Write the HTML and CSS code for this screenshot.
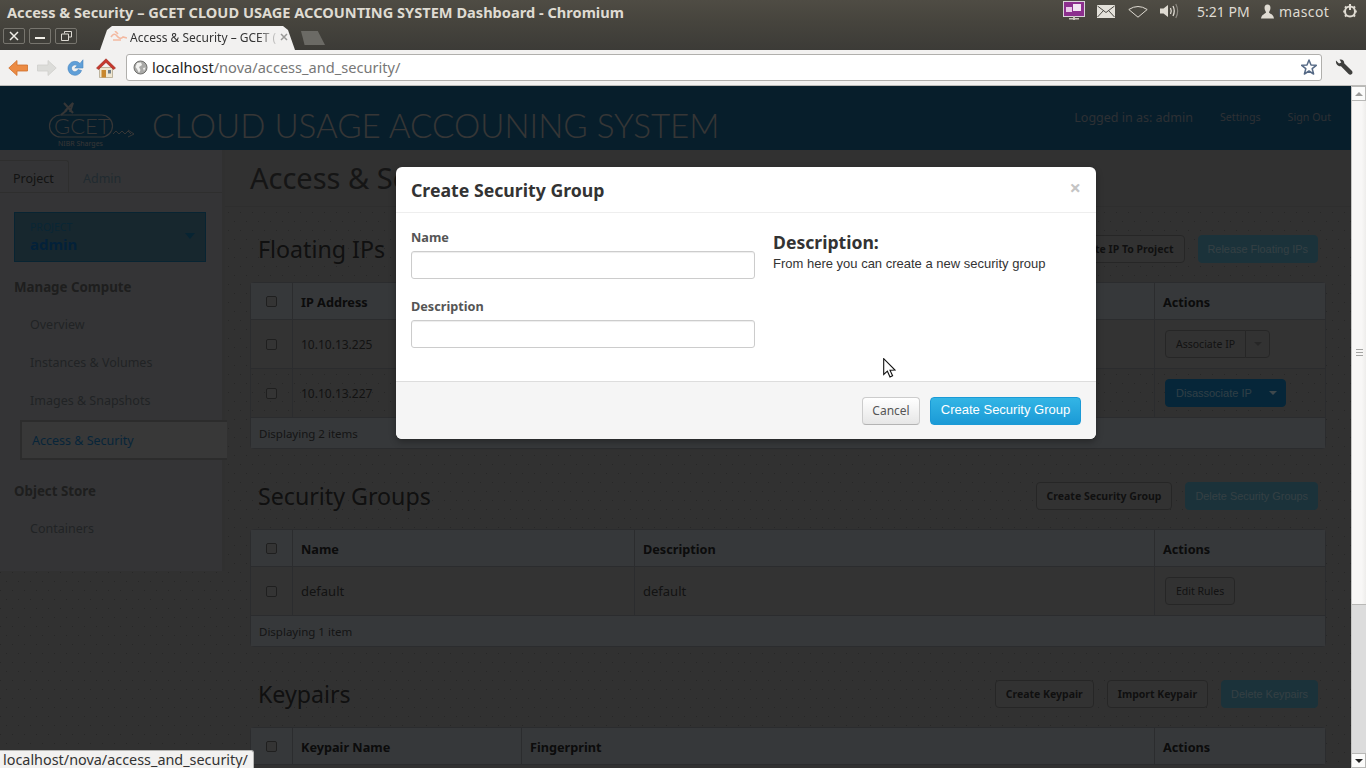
FILE: index.html
```html
<!DOCTYPE html>
<html lang="en">
<head>
    <meta charset="UTF-8">
    <title>Access &amp; Security – GCET CLOUD USAGE ACCOUNTING SYSTEM Dashboard - Chromium</title>
    <link rel="stylesheet" href="styles.css">
</head>
<body>
    <div class="os-bar">
        <span class="os-title">Access &amp; Security – GCET CLOUD USAGE ACCOUNTING SYSTEM Dashboard - Chromium</span>
        <div class="os-indicators">
            <svg class="ind-session" width="22" height="22" viewBox="0 0 22 22">
                <rect x="0.5" y="1.5" width="21" height="15" fill="#8c2f8e" stroke="#d9d3d9"/>
                <rect x="3" y="7" width="6" height="5" fill="#e8c8e8"/>
                <rect x="10" y="4" width="8" height="7" fill="#f2e4f2"/>
                <rect x="6" y="18" width="10" height="1.5" fill="#c8c4bc"/>
                <rect x="10" y="16" width="2" height="4" fill="#c8c4bc"/>
            </svg>
            <svg class="ind-mail" width="18" height="13" viewBox="0 0 18 13">
                <rect width="18" height="13" fill="#e4e1da"/>
                <path d="M0.5 1 L9 7.5 L17.5 1 M0.5 12 L6.5 5.5 M17.5 12 L11.5 5.5" fill="none" stroke="#4a4843" stroke-width="1"/>
            </svg>
            <svg class="ind-wifi" width="20" height="13" viewBox="0 0 20 13">
                <path d="M0.8 4.5 Q10 -1.5 19.2 4.5 L10 12.2 Z" fill="none" stroke="#dfdbd2" stroke-width="1"/>
            </svg>
            <svg class="ind-sound" width="20" height="16" viewBox="0 0 20 16">
                <path d="M0 5.5 H3.5 L8 2 V14 L3.5 10.5 H0 Z" fill="#dfdbd2"/>
                <path d="M10.5 5 Q12 8 10.5 11 M13 3 Q15.5 8 13 13" fill="none" stroke="#dfdbd2" stroke-width="1.3"/>
                <path d="M15.8 1 Q19.5 8 15.8 15" fill="none" stroke="#8b8880" stroke-width="1.2"/>
            </svg>
            <span class="os-time">5:21 PM</span>
            <svg class="ind-user" width="13" height="15" viewBox="0 0 13 15">
                <path d="M6.5 0.5 C9 0.5 9.7 2.6 9.4 4.6 C9.2 6.2 8.5 7.4 7.9 8.2 C8.3 9.6 12.6 10.4 13 14.5 H0 C0.4 10.4 4.7 9.6 5.1 8.2 C4.5 7.4 3.8 6.2 3.6 4.6 C3.3 2.6 4 0.5 6.5 0.5 Z" fill="#dfdbd2"/>
            </svg>
            <span class="os-user">mascot</span>
            <svg class="ind-power" width="16" height="16" viewBox="0 0 16 16">
                <circle cx="8" cy="8.5" r="5" fill="none" stroke="#dfdbd2" stroke-width="2"/>
                <path d="M8 1 V7 M1.2 8.5 H3 M13 8.5 H14.8 M3 3.5 L4.3 4.8 M13 3.5 L11.7 4.8 M3 13.5 L4.3 12.2 M13 13.5 L11.7 12.2" stroke="#dfdbd2" stroke-width="2" fill="none"/>
            </svg>
        </div>
    </div>

    <div class="tab-strip">
        <div class="win-buttons">
            <span class="win-btn">
                <svg width="10" height="10" viewBox="0 0 10 10"><path d="M1 1 L9 9 M9 1 L1 9" stroke="#f0eee8" stroke-width="1.5"/></svg>
            </span>
            <span class="win-btn">
                <svg width="10" height="10" viewBox="0 0 10 10"><path d="M0 7 H10" stroke="#f0eee8" stroke-width="2"/></svg>
            </span>
            <span class="win-btn">
                <svg width="11" height="10" viewBox="0 0 11 10"><path d="M3.5 2.5 V0.5 H10.5 V6 H7.5 M0.5 3 H7.5 V9.5 H0.5 Z" fill="none" stroke="#dcd9d2" stroke-width="1"/></svg>
            </span>
        </div>
        <div class="tab">
            <svg class="favicon" width="17" height="12" viewBox="0 0 17 12">
                <path d="M1 6 Q4 1 7 5 T13 6 L17 7 M5 0 L8 3 M3 9 H11" fill="none" stroke="#f4b9a0" stroke-width="1.6"/>
            </svg>
            <span class="tab-label">Access &amp; Security – GCET (</span>
            <svg class="tab-close" width="8" height="8" viewBox="0 0 8 8"><path d="M1 1 L7 7 M7 1 L1 7" stroke="#9a9a98" stroke-width="1.5"/></svg>
        </div>
        <span class="new-tab"></span>
    </div>

    <div class="toolbar">
        <svg class="tool-back" width="20" height="16" viewBox="0 0 20 16">
            <path d="M9 0.5 L0.8 8 L9 15.5 V11 H19.5 V5 H9 Z" fill="#ec8b43" stroke="#cf6f2c" stroke-width="0.8"/>
        </svg>
        <svg class="tool-forward" width="20" height="16" viewBox="0 0 20 16">
            <path d="M11 0.5 L19.2 8 L11 15.5 V11 H0.5 V5 H11 Z" fill="#dcdcd9" stroke="#cfcfcc" stroke-width="0.8"/>
        </svg>
        <svg class="tool-reload" width="18" height="18" viewBox="0 0 18 18">
            <path d="M14 4.5 A7 7 0 1 0 15.6 11.5 L12 10.6 A3.4 3.4 0 1 1 11.2 6.8 L8.8 9 H17 V0.8 Z" fill="#5f9fd8" stroke="#4a86c0" stroke-width="0.6"/>
        </svg>
        <svg class="tool-home" width="20" height="20" viewBox="0 0 20 20">
            <path d="M3.5 9.5 V19.5 H16.5 V9.5 Z" fill="#efe6d0" stroke="#a89c80" stroke-width="0.7"/>
            <path d="M0.5 10 L10 0.8 L19.5 10 L17.5 11.5 L10 4.4 L2.5 11.5 Z" fill="#c8372c" stroke="#992a20" stroke-width="0.6"/>
            <rect x="5.5" y="12" width="4.5" height="7.5" fill="#c8872e"/>
            <rect x="12" y="12" width="3" height="3.5" fill="#6f7e8a"/>
        </svg>
        <div class="url-box">
            <svg class="url-globe" width="15" height="15" viewBox="0 0 15 15">
                <circle cx="7.5" cy="7.5" r="6.5" fill="#a9a9a7" stroke="#6f6f6d" stroke-width="1"/>
                <path d="M4 3 L8 2.5 L9 5 L6 7 L7.5 10 L6 13 L4 9 L2.5 7 Z M10 8 L12.5 7.5 L11 11 Z" fill="#f2f2f0"/>
            </svg>
            <span class="url-host">localhost</span><span class="url-path">/nova/access_and_security/</span>
            <svg class="url-star" width="16" height="16" viewBox="0 0 16 16">
                <path d="M8 1 L10 6 L15.3 6.3 L11.2 9.7 L12.6 15 L8 12 L3.4 15 L4.8 9.7 L0.7 6.3 L6 6 Z" fill="#fff" stroke="#566a86" stroke-width="1.5" stroke-linejoin="round"/>
            </svg>
        </div>
        <svg class="tool-wrench" width="18" height="17" viewBox="0 0 18 17">
            <path d="M1 1.5 L4 4.5 L6.3 3.6 L4.6 0.6 C7.2 -0.2 9.4 1.6 9.2 4.2 L16.8 11.8 C17.8 12.8 17.6 14.2 16.8 15 C15.9 15.9 14.5 15.9 13.6 15 L6 7.2 C3.4 7.6 0.4 5 1 1.5 Z" fill="#3f3f3d"/>
        </svg>
    </div>

    <div class="viewport">
        <div class="page">
            <header class="top-bar">
                <svg class="logo" width="88" height="52" viewBox="0 0 88 52">
                    <path d="M13 17 L19 12 M16 5 L25 15 M17 13 L25 5 L22 14" fill="none" stroke="#b4b4b4" stroke-width="2"/>
                    <rect x="1.5" y="17" width="63" height="22" rx="11" fill="none" stroke="#b4b4b4" stroke-width="1.2"/>
                    <text x="6" y="36" class="logo-text">GCET</text>
                    <path d="M65 36 L68 33 L71 36 L74 33 L77 36 L80 33 L83 36 M80 32 L86 36 L80 39" fill="none" stroke="#b4b4b4" stroke-width="1"/>
                    <text x="10" y="48" class="logo-sub">NIBR Sharges</text>
                </svg>
                <span class="brand">CLOUD USAGE ACCOUNING SYSTEM</span>
                <nav class="user-nav">
                    <span class="user-name">Logged in as: admin</span>
                    <a class="user-link">Settings</a>
                    <a class="user-link">Sign Out</a>
                </nav>
            </header>

            <div class="columns">
                <aside class="sidebar">
                    <div class="side-tabs">
                        <span class="side-tab active">Project</span>
                        <span class="side-tab">Admin</span>
                    </div>
                    <div class="project-box">
                        <span class="project-label">PROJECT</span>
                        <span class="project-name">admin</span>
                        <span class="project-caret"></span>
                    </div>
                    <h4 class="side-title">Manage Compute</h4>
                    <ul class="side-nav">
                        <li>Overview</li>
                        <li>Instances &amp; Volumes</li>
                        <li>Images &amp; Snapshots</li>
                        <li class="current">Access &amp; Security</li>
                    </ul>
                    <h4 class="side-title store">Object Store</h4>
                    <ul class="side-nav">
                        <li>Containers</li>
                    </ul>
                </aside>

                <main class="content">
                    <div class="page-title"><h2>Access &amp; Security</h2></div>

                    <div class="sections">
                        <section class="block">
                            <div class="block-head">
                                <h3>Floating IPs</h3>
                                <div class="block-actions">
                                    <a class="btn">Allocate IP To Project</a>
                                    <a class="btn btn-primary">Release Floating IPs</a>
                                </div>
                            </div>
                            <table class="data" cellspacing="0">
                                <colgroup><col class="c-check"><col style="width:300px"><col style="width:300px"><col><col class="c-actions"></colgroup>
                                <thead>
                                    <tr><th><span class="check"></span></th><th>IP Address</th><th>Instance</th><th>Floating IP Pool</th><th>Actions</th></tr>
                                </thead>
                                <tbody>
                                    <tr>
                                        <td><span class="check"></span></td><td class="ip">10.10.13.225</td><td>-</td><td>nova</td>
                                        <td><span class="split"><a class="btn btn-plain">Associate IP</a><a class="btn btn-plain caret-btn"><i class="caret"></i></a></span></td>
                                    </tr>
                                    <tr class="clear">
                                        <td><span class="check"></span></td><td class="ip">10.10.13.227</td><td>-</td><td>nova</td>
                                        <td><span class="split"><a class="btn btn-dark">Disassociate IP</a><a class="btn btn-dark caret-btn"><i class="caret light"></i></a></span></td>
                                    </tr>
                                </tbody>
                                <tfoot>
                                    <tr><td colspan="5">Displaying 2 items</td></tr>
                                </tfoot>
                            </table>
                        </section>

                        <section class="block">
                            <div class="block-head">
                                <h3>Security Groups</h3>
                                <div class="block-actions">
                                    <a class="btn">Create Security Group</a>
                                    <a class="btn btn-primary">Delete Security Groups</a>
                                </div>
                            </div>
                            <table class="data" cellspacing="0">
                                <colgroup><col class="c-check"><col style="width:342px"><col><col class="c-actions"></colgroup>
                                <thead>
                                    <tr><th><span class="check"></span></th><th>Name</th><th>Description</th><th>Actions</th></tr>
                                </thead>
                                <tbody>
                                    <tr>
                                        <td><span class="check"></span></td><td>default</td><td>default</td>
                                        <td><a class="btn btn-plain">Edit Rules</a></td>
                                    </tr>
                                </tbody>
                                <tfoot>
                                    <tr><td colspan="4">Displaying 1 item</td></tr>
                                </tfoot>
                            </table>
                        </section>

                        <section class="block">
                            <div class="block-head">
                                <h3>Keypairs</h3>
                                <div class="block-actions">
                                    <a class="btn">Create Keypair</a>
                                    <a class="btn">Import Keypair</a>
                                    <a class="btn btn-primary">Delete Keypairs</a>
                                </div>
                            </div>
                            <table class="data" cellspacing="0">
                                <colgroup><col class="c-check"><col style="width:229px"><col><col class="c-actions"></colgroup>
                                <thead>
                                    <tr><th><span class="check"></span></th><th>Keypair Name</th><th>Fingerprint</th><th>Actions</th></tr>
                                </thead>
                            </table>
                        </section>
                    </div>
                </main>
            </div>

            <div class="backdrop"></div>

            <div class="modal">
                <div class="modal-header">
                    <h3>Create Security Group</h3>
                    <span class="modal-close">×</span>
                </div>
                <div class="modal-body">
                    <form class="modal-form">
                        <label for="sg-name">Name</label>
                        <input type="text" id="sg-name">
                        <label for="sg-desc">Description</label>
                        <input type="text" id="sg-desc">
                    </form>
                    <div class="modal-help">
                        <h3>Description:</h3>
                        <p>From here you can create a new security group</p>
                    </div>
                </div>
                <div class="modal-footer">
                    <button type="button" class="modal-cancel">Cancel</button>
                    <button type="button" class="modal-submit">Create Security Group</button>
                </div>
            </div>

            <svg class="cursor" width="13" height="20" viewBox="0 0 13 20">
                <path d="M0.7 0.7 V16.5 L4.4 13.2 L7 19 L9.6 17.8 L7 12.2 L12 12 Z" fill="#fff" stroke="#111" stroke-width="1.1"/>
            </svg>

            <div class="status-bubble">localhost/nova/access_and_security/</div>
        </div>

        <div class="scrollbar">
            <span class="scroll-btn"><i class="arrow-up"></i></span>
            <span class="scroll-thumb"><i class="grip"></i></span>
            <span class="scroll-track"></span>
            <span class="scroll-btn"><i class="arrow-down"></i></span>
        </div>
    </div>
</body>
</html>
```

FILE: styles.css
```css
* {
    margin: 0;
    padding: 0;
    box-sizing: border-box;
}

html, body {
    height: 768px;
    overflow: hidden;
}

body {
    font-family: 'Noto Sans', sans-serif;
    font-size: 13px;
    background-color: #3c3b37;
}

/* desktop panel */
.os-bar {
    height: 22px;
    display: flex;
    align-items: center;
    justify-content: space-between;
    padding-left: 7px;
    background: linear-gradient(#4f4c44, #46443d);
    color: #dfdbd2;
}

.os-title {
    font-size: 14.6px;
    font-weight: bold;
    white-space: nowrap;
    padding-top: 1px;
}

.os-indicators {
    display: flex;
    align-items: center;
    height: 22px;
    padding-right: 8px;
}

.ind-session { margin-right: 12px; }
.ind-mail { margin-right: 13px; }
.ind-wifi { margin-right: 12px; }
.ind-sound { margin-right: 17px; }
.ind-user { margin: 0 5px 0 12px; }

.os-time, .os-user {
    font-size: 14px;
    white-space: nowrap;
}

.os-time { width: 52px; }
.os-user { width: 50px; letter-spacing: 0.4px; }
.ind-power { margin-left: 13px; }

/* browser window */
.tab-strip {
    height: 28px;
    display: flex;
    padding-left: 3px;
    background: linear-gradient(#46443d, #3c3b37);
}

.win-buttons {
    display: flex;
    gap: 4px;
    padding-top: 6px;
}

.win-btn {
    width: 22px;
    height: 16px;
    display: flex;
    align-items: center;
    justify-content: center;
    border: 1px solid #77756e;
    border-radius: 2px;
    background-color: #3f3e39;
}

.tab {
    width: 195px;
    height: 24px;
    margin: 4px 0 0 23px;
    padding: 0 7px 2px 10px;
    display: flex;
    align-items: center;
    background-color: #f2f1f0;
    clip-path: polygon(0 100%, 7px 4px, 12px 0, calc(100% - 12px) 0, calc(100% - 7px) 4px, 100% 100%);
}

.favicon { flex: none; margin-right: 3px; }

.tab-label {
    flex: 1;
    font-size: 12px;
    color: #333;
    white-space: nowrap;
    -webkit-mask-image: linear-gradient(90deg, #000 85%, transparent);
    mask-image: linear-gradient(90deg, #000 85%, transparent);
}

.tab-close { flex: none; }

.new-tab {
    width: 24px;
    height: 14px;
    margin: 9px 0 0 6px;
    background-color: #6b6a65;
    clip-path: polygon(0 0, 70% 0, 100% 100%, 15% 100%);
}

.toolbar {
    height: 36px;
    display: flex;
    align-items: center;
    background-color: #f2f1f0;
    border-bottom: 1px solid #bdbcb9;
}

.tool-back { margin-left: 8px; }
.tool-forward { margin-left: 9px; }
.tool-reload { margin-left: 9px; }
.tool-home { margin-left: 12px; }
.tool-wrench { margin-left: 13px; }

.url-box {
    width: 1196px;
    height: 27px;
    margin-left: 10px;
    padding: 0 4px 1px 6px;
    display: flex;
    align-items: center;
    background-color: #fff;
    border: 1px solid #b0afac;
    border-radius: 3px;
    font-size: 14.6px;
}

.url-globe { margin-right: 4px; flex: none; }
.url-host { color: #222; }
.url-path { color: #777; flex: 1; }
.url-star { flex: none; }

/* page + scrollbar */
.viewport {
    height: 682px;
    display: flex;
}

.page {
    position: relative;
    width: 1351px;
    overflow: hidden;
    background-color: #a4a4a4;
    background-image:
        radial-gradient(circle at 0.5px 0.5px, #828282 0.5px, transparent 0.7px),
        radial-gradient(circle at 0.5px 0.5px, #828282 0.5px, transparent 0.7px);
    background-size: 12px 18px;
    background-position: 0 0, 6px 9px;
}

.scrollbar {
    width: 15px;
    display: flex;
    flex-direction: column;
    background-color: #dcdcdc;
    border-left: 1px solid #c4c4c2;
}

.scroll-btn {
    height: 15px;
    display: flex;
    align-items: center;
    justify-content: center;
    background-color: #fbfbfa;
    border: 1px solid #b8b8b6;
    border-left: 0;
}

.arrow-up {
    border: 4px solid transparent;
    border-top: 0;
    border-bottom: 4px solid #9b9b99;
}

.arrow-down {
    border: 4px solid transparent;
    border-bottom: 0;
    border-top: 4px solid #222;
}

.scroll-thumb {
    height: 504px;
    display: flex;
    align-items: center;
    justify-content: center;
    background: linear-gradient(90deg, #f8f7f6, #f8f7f6 70%, #eeedeb);
    border-bottom: 1px solid #b8b8b6;
}

.grip {
    width: 7px;
    height: 7px;
    background: repeating-linear-gradient(#a4a4a2 0, #a4a4a2 1px, transparent 1px, transparent 3px);
}

.scroll-track { flex: 1; }

/* dashboard header */
.top-bar {
    height: 64px;
    display: flex;
    align-items: center;
    padding-right: 20px;
    background-color: #1a6490;
    color: #b4b4b4;
}

.logo {
    margin: 12px 16px 0 48px;
    flex: none;
    align-self: flex-start;
}

.logo-text {
    font-family: 'Lato', sans-serif;
    font-size: 22px;
    fill: #b4b4b4;
    font-weight: 300;
}

.logo-sub {
    font-size: 7px;
    fill: #b4b4b4;
}

.brand {
    font-family: 'Lato', sans-serif;
    font-weight: 300;
    font-size: 33.2px;
    white-space: nowrap;
    padding-top: 14px;
}

.user-nav {
    margin-left: auto;
    padding-bottom: 2px;
    display: flex;
    align-items: center;
    color: #96a0ad;
}

.user-name { font-size: 12.5px; margin-right: 27px; }
.user-link { font-size: 10.7px; }
.user-link + .user-link { margin-left: 27px; }

.columns {
    display: flex;
    align-items: flex-start;
}

/* sidebar */
.sidebar {
    width: 225px;
    flex: none;
    padding: 10px 0 24px;
    background-color: #adb0b4;
    border-right: 3px solid #a0a0a0;
}

.side-tabs {
    display: flex;
    height: 33px;
    border-bottom: 1px solid #9a9a9a;
}

.side-tab {
    padding: 0 13px;
    line-height: 37px;
    font-size: 12.5px;
    color: #6f8da0;
}

.side-tab.active {
    color: #404040;
    width: 69px;
    border: 1px solid #9a9a9a;
    border-left: 0;
    border-bottom: 0;
    border-radius: 0 3px 0 0;
    line-height: 35px;
    margin-right: 1px;
}

.project-box {
    position: relative;
    display: flex;
    flex-direction: column;
    width: 192px;
    height: 50px;
    margin: 19px 0 0 14px;
    padding: 8px 15px 0;
    background-color: #4f8299;
    border: 1px solid #1c7aa8;
    color: #0a70c0;
}

.project-label {
    font-size: 10.5px;
    line-height: 13px;
    color: #2080b0;
}

.project-name {
    font-size: 15px;
    font-weight: bold;
    line-height: 20px;
}

.project-caret {
    position: absolute;
    right: 10px;
    top: 20px;
    border: 5px solid transparent;
    border-bottom: 0;
    border-top: 6px solid #1878a8;
}

.side-title {
    height: 24px;
    margin: 13px 0 0 14px;
    font-size: 13.3px;
    line-height: 24px;
    color: #666;
}

.side-title.store { margin-top: 19px; }

.side-nav {
    list-style: none;
    margin-top: 6px;
}

.side-nav li {
    height: 38px;
    line-height: 40px;
    padding-left: 30px;
    font-size: 12.5px;
    color: #70757c;
}

.side-nav li.current {
    height: 40px;
    line-height: 38px;
    margin: 1px -5px 0 20px;
    padding-left: 10px;
    background-color: #bbb;
    border: 2px solid #959595;
    border-right: 0;
    color: #1a7cc0;
}

/* main column */
.content {
    flex: 1;
    min-width: 0;
}

.page-title {
    height: 57px;
    padding-left: 25px;
    background-color: #a4a4a4;
    border-bottom: 1px solid #9b9b9b;
}

.page-title h2 {
    font-size: 29px;
    font-weight: normal;
    line-height: 56px;
    color: #484848;
    white-space: nowrap;
}

.sections {
    padding: 28px 25px 0;
}

.block {
    margin-bottom: 33px;
}

.block-head {
    display: flex;
    align-items: center;
    justify-content: space-between;
    height: 28px;
    padding: 0 8px;
    margin-bottom: 19px;
}

.block-head h3 {
    font-size: 23.2px;
    font-weight: normal;
    line-height: 28px;
    color: #383838;
}

.block-actions {
    display: flex;
    gap: 13px;
}

.btn {
    display: inline-block;
    height: 28px;
    padding: 0 10px;
    font-size: 10.5px;
    font-weight: bold;
    line-height: 27px;
    white-space: nowrap;
    color: #383838;
    background-color: #a8a8a8;
    border: 1px solid #808080;
    border-radius: 4px;
}

.btn-primary {
    padding: 0 9px;
    font-family: 'Liberation Sans', sans-serif;
    font-size: 10.9px;
    font-weight: normal;
    color: #b0d4e0;
    background-color: #5aa8c4;
    border-color: #5aa8c4;
}

.btn-plain {
    font-weight: normal;
    color: #404040;
    margin-left: 2px;
}

.btn-dark {
    font-family: 'Liberation Sans', sans-serif;
    font-size: 11px;
    font-weight: normal;
    color: #a0d0e8;
    background-color: #1480c0;
    border-color: #1480c0;
    margin-left: 2px;
    padding-right: 9px;
}

.split {
    display: inline-flex;
}

.split .btn:first-child {
    border-radius: 4px 0 0 4px;
}

.split .caret-btn {
    width: 25px;
    margin-left: -1px;
    padding: 0;
    display: flex;
    align-items: center;
    justify-content: center;
    border-radius: 0 4px 4px 0;
}

.caret {
    border: 4px solid transparent;
    border-bottom: 0;
    border-top: 4px solid #808080;
}

.caret.light {
    border-top-color: #d0f0ff;
}

/* tables */
.data {
    width: 100%;
    table-layout: fixed;
    border: 1px solid #90959c;
    border-radius: 4px;
    border-spacing: 0;
}

.c-check { width: 41px; }
.c-actions { width: 171px; }

.data th, .data td {
    padding: 0 8px;
    text-align: left;
    border-left: 1px solid #90959c;
}

.data th:first-child, .data td:first-child {
    border-left: 0;
    padding: 0;
    text-align: center;
}

.data th {
    height: 36px;
    padding-top: 1px;
    font-size: 12.7px;
    color: #282828;
    background-color: #b4bbc2;
}

.data tbody td {
    height: 49px;
    font-size: 13px;
    border-top: 1px solid #90959c;
    color: #404040;
    background-color: #aaa;
}

.data tbody td.ip { font-size: 12px; }
.data tbody .clear td { background-color: transparent; }

.data tfoot td,
.data tfoot td:first-child {
    height: 31px;
    padding: 1px 8px 0;
    text-align: left;
    font-size: 11.5px;
    border-top: 1px solid #90959c;
    background-color: #b4bbc2;
    color: #484848;
}

.check {
    display: inline-block;
    width: 11px;
    height: 11px;
    margin-top: -2px;
    vertical-align: middle;
    background-color: #b0b0b0;
    border: 1px solid #686868;
    border-radius: 2px;
}

/* modal */
.backdrop {
    position: absolute;
    inset: 0;
    background-color: rgba(0, 0, 0, 0.7);
}

.modal {
    position: absolute;
    left: 396px;
    top: 81px;
    width: 700px;
    height: 272px;
    display: flex;
    flex-direction: column;
    background-color: #fff;
    border-radius: 6px;
    box-shadow: 0 3px 7px rgba(0, 0, 0, 0.3);
    overflow: hidden;
}

.modal-header {
    height: 46px;
    display: flex;
    align-items: center;
    justify-content: space-between;
    padding: 0 15px;
    border-bottom: 1px solid #eee;
}

.modal-header h3 {
    font-size: 17.7px;
    line-height: 46px;
    color: #333;
}

.modal-close {
    font-size: 20px;
    font-weight: bold;
    color: #c4c4c4;
    margin-top: -4px;
}

.modal-body {
    flex: 1;
    display: flex;
    padding: 16px 15px 0;
}

.modal-form {
    width: 344px;
    flex: none;
    display: flex;
    flex-direction: column;
}

.modal-form label {
    height: 18px;
    font-size: 12.7px;
    font-weight: bold;
    line-height: 16px;
    color: #555;
    margin-bottom: 4px;
}

.modal-form input {
    width: 344px;
    height: 28px;
    margin-bottom: 19px;
    background-color: #fff;
    border: 1px solid #ccc;
    border-radius: 3px;
    box-shadow: inset 0 1px 1px rgba(0, 0, 0, 0.075);
}

.modal-help {
    margin-left: 18px;
}

.modal-help h3 {
    font-size: 17.6px;
    line-height: 26px;
    color: #333;
}

.modal-help p {
    font-family: 'Liberation Sans', sans-serif;
    font-size: 13px;
    line-height: 18px;
    color: #333;
}

.modal-footer {
    height: 58px;
    display: flex;
    align-items: center;
    justify-content: flex-end;
    gap: 10px;
    padding: 0 15px;
    background-color: #f5f5f5;
    border-top: 1px solid #ddd;
}

.modal-cancel {
    width: 58px;
    height: 28px;
    font-family: 'Noto Sans', sans-serif;
    font-size: 12px;
    color: #555;
    background: linear-gradient(#fff, #e6e6e6);
    border: 1px solid #ccc;
    border-bottom-color: #b3b3b3;
    border-radius: 4px;
}

.modal-submit {
    width: 151px;
    height: 28px;
    padding-bottom: 2px;
    font-family: 'Liberation Sans', sans-serif;
    font-size: 13px;
    color: #fff;
    background: linear-gradient(#33b5e5, #1b9ad6);
    border: 1px solid #1b9ad6;
    border-radius: 4px;
}

.cursor {
    position: absolute;
    left: 883px;
    top: 272px;
}

.status-bubble {
    position: absolute;
    left: 0;
    bottom: 0;
    height: 18px;
    padding: 0 5px 0 3px;
    font-size: 14.4px;
    line-height: 17px;
    color: #333;
    background-color: #f2f1f0;
    border-top: 1px solid #b8b8b6;
    border-right: 1px solid #b8b8b6;
    border-radius: 0 3px 0 0;
}
```
